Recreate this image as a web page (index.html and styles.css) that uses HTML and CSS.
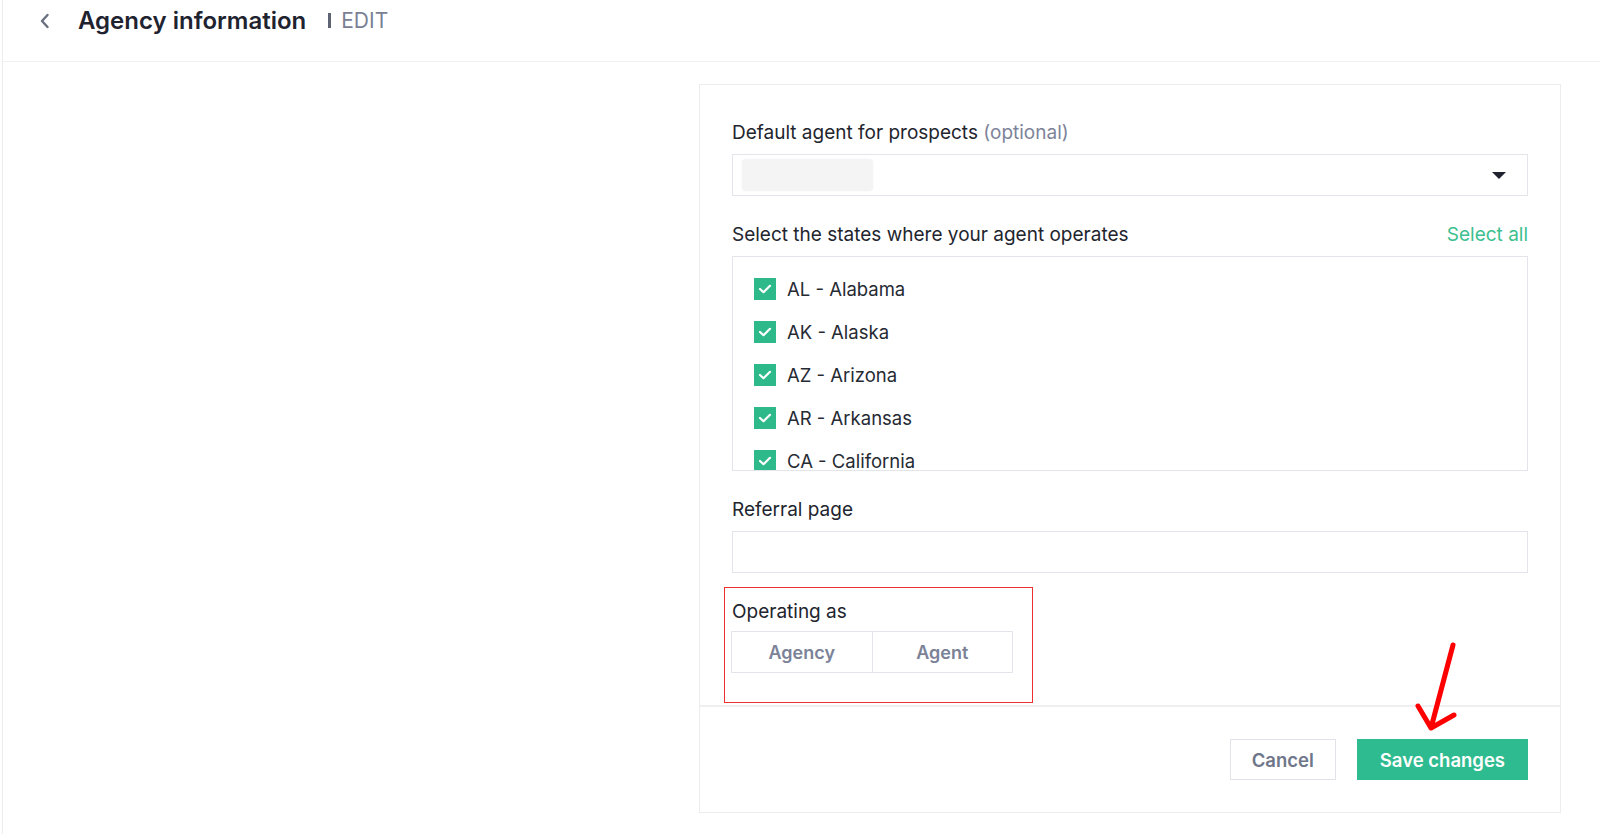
FILE: index.html
```html
<!DOCTYPE html>
<html lang="en">
<head>
    <meta charset="UTF-8">
    <meta name="viewport" content="width=device-width, initial-scale=1.0">
    <title>Agency information - Edit</title>
    <link rel="stylesheet" href="styles.css">
</head>
<body>

<div class="app">
    <header class="topbar">
        <a class="back" href="#">
            <svg width="12" height="16" viewBox="0 0 12 16"><path d="M8.5 2 L3 8 L8.5 14" fill="none" stroke="#6b7080" stroke-width="2.4" stroke-linecap="round" stroke-linejoin="round"/></svg>
        </a>
        <h1>Agency information</h1>
        <span class="sep"></span>
        <span class="mode">EDIT</span>
    </header>

    <main class="main">
        <div class="card">
            <div class="card-body">
                <div class="field">
                    <label>Default agent for prospects <span class="muted">(optional)</span></label>
                    <div class="select">
                        <span class="blurred"></span>
                        <svg class="caret" width="14" height="8" viewBox="0 0 14 8"><path d="M0 0 H14 L7 7 Z" fill="#1f2330"/></svg>
                    </div>
                </div>

                <div class="field">
                    <div class="label-row">
                        <label>Select the states where your agent operates</label>
                        <a class="link" href="#">Select all</a>
                    </div>
                    <div class="states">
                        <div class="state"><span class="check"><svg width="14" height="10" viewBox="0 0 14 10"><path d="M2 5 L5.5 8.2 L12 1.8" fill="none" stroke="#fff" stroke-width="2.2" stroke-linecap="round" stroke-linejoin="round"/></svg></span>AL - Alabama</div>
                        <div class="state"><span class="check"><svg width="14" height="10" viewBox="0 0 14 10"><path d="M2 5 L5.5 8.2 L12 1.8" fill="none" stroke="#fff" stroke-width="2.2" stroke-linecap="round" stroke-linejoin="round"/></svg></span>AK - Alaska</div>
                        <div class="state"><span class="check"><svg width="14" height="10" viewBox="0 0 14 10"><path d="M2 5 L5.5 8.2 L12 1.8" fill="none" stroke="#fff" stroke-width="2.2" stroke-linecap="round" stroke-linejoin="round"/></svg></span>AZ - Arizona</div>
                        <div class="state"><span class="check"><svg width="14" height="10" viewBox="0 0 14 10"><path d="M2 5 L5.5 8.2 L12 1.8" fill="none" stroke="#fff" stroke-width="2.2" stroke-linecap="round" stroke-linejoin="round"/></svg></span>AR - Arkansas</div>
                        <div class="state"><span class="check"><svg width="14" height="10" viewBox="0 0 14 10"><path d="M2 5 L5.5 8.2 L12 1.8" fill="none" stroke="#fff" stroke-width="2.2" stroke-linecap="round" stroke-linejoin="round"/></svg></span>CA - California</div>
                    </div>
                </div>

                <div class="field field-last">
                    <label>Referral page</label>
                    <input class="text-input" type="text">
                </div>

                <div class="operating">
                    <label>Operating as</label>
                    <div class="segment">
                        <button>Agency</button>
                        <button>Agent</button>
                    </div>
                </div>
            </div>

            <div class="card-footer">
                <button class="btn btn-cancel">Cancel</button>
                <button class="btn btn-save">Save changes</button>
            </div>
        </div>
    </main>

    <!-- annotation arrow -->
    <svg class="arrow" width="56" height="100" viewBox="0 0 56 100">
        <path d="M43 5 L21 88 M8 66 L21 88 L44 75" fill="none" stroke="#ff0000" stroke-width="5" stroke-linecap="round" stroke-linejoin="round"/>
    </svg>
</div>

</body>
</html>
```

FILE: styles.css
```css
* {
    box-sizing: border-box;
}
body {
    margin: 0;
    font-family: Inter, "Noto Sans", Arial, sans-serif;
    color: #22252e;
    background-color: #fff;
}
.app {
    position: relative;
    margin-left: 2px;
    min-height: 834px;
    border-left: 1px solid #ececec;
}
.topbar {
    display: flex;
    align-items: center;
    height: 62px;
    padding-left: 36px;
    padding-bottom: 20px;
    border-bottom: 1px solid #f0f0f1;
}
.back {
    display: flex;
    width: 12px;
    margin-right: 27px;
}
.topbar h1 {
    margin: 0;
    font-size: 24px;
    font-weight: 600;
    color: #1f2330;
}
.sep {
    width: 3px;
    height: 15px;
    margin: 0 10px 0 22px;
    background-color: #5e6474;
}
.mode {
    font-size: 21px;
    color: #7a8094;
}
.main {
    display: flex;
    justify-content: flex-end;
    padding: 22px 39px 0 0;
}
.card {
    width: 862px;
    border: 1px solid #ededf0;
}
.card-body {
    padding: 36px 32px 2px 32px;
}
.field {
    margin-bottom: 27px;
}
.field-last {
    margin-bottom: 14px;
}
.field label,
.operating label {
    display: block;
    font-size: 19px;
    line-height: 24px;
    margin-bottom: 9px;
}
.muted {
    color: #7d8398;
}
.label-row {
    display: flex;
    justify-content: space-between;
}
.link {
    font-size: 19px;
    line-height: 24px;
    color: #3dbf8f;
    text-decoration: none;
}
.select {
    display: flex;
    align-items: center;
    justify-content: space-between;
    height: 42px;
    padding: 0 21px 0 9px;
    border: 1px solid #e4e5ea;
}
.blurred {
    width: 131px;
    height: 32px;
    border-radius: 4px;
    background-color: #f4f4f5;
    box-shadow: 0 0 2px #f4f4f5;
}
.caret {
    margin-top: 2px;
}
.states {
    height: 215px;
    overflow: hidden;
    padding: 21px 0 0 21px;
    border: 1px solid #e4e5ea;
}
.state {
    display: flex;
    align-items: center;
    gap: 11px;
    height: 22px;
    margin-bottom: 21px;
    font-size: 18.5px;
    color: #262a33;
}
.check {
    display: flex;
    align-items: center;
    justify-content: center;
    width: 22px;
    height: 22px;
    background-color: #2eb98a;
}
.text-input {
    display: block;
    width: 100%;
    height: 42px;
    border: 1px solid #e4e5ea;
    font-family: inherit;
    font-size: 18px;
}
.operating {
    width: 309px;
    margin-left: -8px;
    padding: 12px 19px 29px 6px;
    border: 1px solid #ee2f2f;
}
.operating label {
    padding-left: 1px;
    margin-bottom: 7px;
}
.segment {
    display: flex;
    height: 42px;
    border: 1px solid #e4e5ea;
}
.segment button {
    flex: 1;
    border: none;
    background: #fff;
    font-family: inherit;
    font-size: 18px;
    font-weight: 600;
    color: #7b8297;
}
.segment button + button {
    border-left: 1px solid #e4e5ea;
}
.card-footer {
    display: flex;
    justify-content: flex-end;
    gap: 21px;
    padding: 32px 32px 32px;
    border-top: 2px solid #efeff1;
}
.btn {
    height: 41px;
    padding: 0 22px;
    font-family: inherit;
    font-size: 18.5px;
    font-weight: 600;
    cursor: pointer;
}
.btn-cancel {
    padding: 0 21px;
    background-color: #fff;
    color: #6f768a;
    border: 1px solid #e1e3e8;
}
.btn-save {
    background-color: #2ebb8f;
    color: #fff;
    border: 1px solid #2ebb8f;
}
.arrow {
    position: absolute;
    left: 1407px;
    top: 640px;
}
```
